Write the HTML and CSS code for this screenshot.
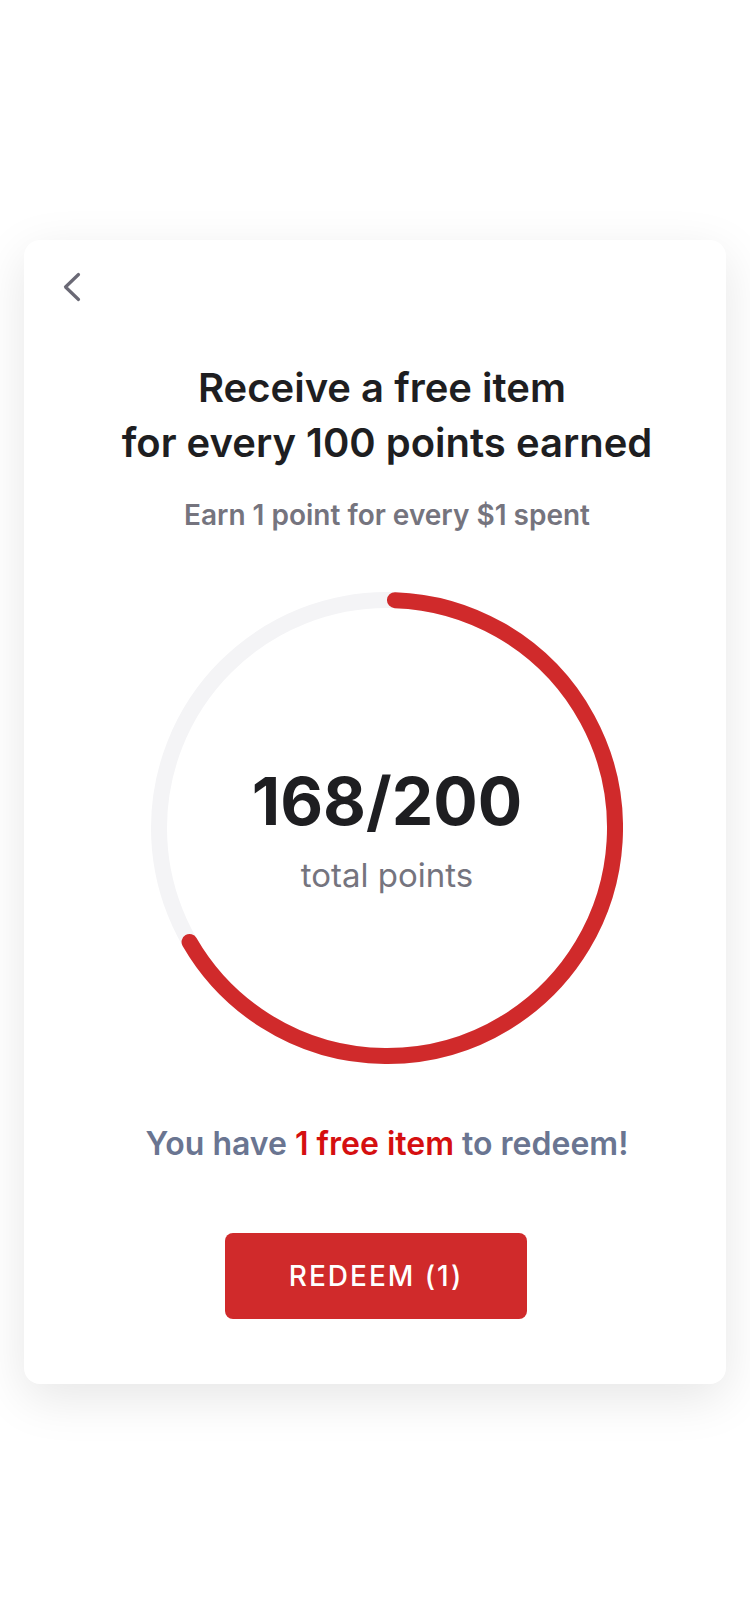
FILE: index.html
```html
<!DOCTYPE html>
<html lang="en">
<head>
<meta charset="utf-8">
<title>Rewards</title>
<link rel="stylesheet" href="styles.css">
</head>
<body>
<main class="card">
  <header class="card-header">
    <button class="back-btn" aria-label="Back">
      <svg width="18" height="30" viewBox="0 0 18 30"><path d="M15.5 2.5 L2.5 15 L15.5 27.5" fill="none" stroke="#6a6975" stroke-width="3.2" stroke-linecap="round" stroke-linejoin="round"/></svg>
    </button>
  </header>
  <section class="content">
    <h1 class="title">Receive a free item&nbsp;<br>for every 100 points earned</h1>
    <p class="subtitle">Earn 1 point for every $1 spent</p>
    <div class="ring">
      <svg class="ring-svg" width="472" height="472" viewBox="0 0 472 472">
        <circle cx="236" cy="236" r="228" fill="none" stroke="#f4f4f6" stroke-width="16"/>
        <path d="M243.96 8.14 A228 228 0 1 1 38.55 350.00" fill="none" stroke="#d02a2b" stroke-width="16" stroke-linecap="round"/>
      </svg>
      <div class="ring-text">
        <div class="points">168/200</div>
        <div class="points-label">total points</div>
      </div>
    </div>
    <p class="notice">You have <span class="accent">1 free item</span> to redeem!</p>
  </section>
  <div class="actions">
    <button class="redeem-btn">REDEEM (1)</button>
  </div>
</main>
</body>
</html>
```
FILE: styles.css
```css
* { box-sizing: border-box; }
html, body {
  margin: 0;
  padding: 0;
  background: #ffffff;
}
body {
  font-family: Inter, "Noto Sans", "Liberation Sans", sans-serif;
  padding-top: 240px;
  padding-bottom: 240px;
}
.card {
  margin: 0 24px;
  width: 702px;
  background: #ffffff;
  border-radius: 16px;
  box-shadow: 0 14px 50px rgba(0, 0, 0, 0.1);
  padding: 32px 0 65px;
  display: flex;
  flex-direction: column;
}
.card-header {
  display: flex;
  padding-left: 39px;
  height: 30px;
}
.back-btn {
  border: 0;
  background: none;
  padding: 0;
  margin: 0;
  width: 18px;
  height: 30px;
  display: block;
  cursor: pointer;
}
.back-btn svg { display: block; }
.content {
  display: flex;
  flex-direction: column;
  align-items: center;
  padding-left: 24px;
}
.title {
  margin: 58px 0 0;
  font-size: 40px;
  line-height: 55px;
  font-weight: 600;
  color: #1e1e21;
  text-align: center;
}
.subtitle {
  margin: 27px 0 0;
  font-size: 28px;
  line-height: 36px;
  font-weight: 600;
  color: #75747e;
  text-align: center;
}
.ring {
  margin-top: 58.5px;
  width: 472px;
  height: 472px;
  display: grid;
}
.ring-svg {
  grid-area: 1 / 1;
  display: block;
}
.ring-text {
  grid-area: 1 / 1;
  align-self: start;
  margin-top: 176px;
  display: flex;
  flex-direction: column;
  align-items: center;
}
.points {
  font-size: 66px;
  line-height: 66px;
  font-weight: 700;
  color: #1e1e21;
}
.points-label {
  margin-top: 21px;
  font-size: 33px;
  line-height: 40px;
  font-weight: 400;
  color: #75747e;
}
.notice {
  margin: 60px 0 0;
  font-size: 32px;
  line-height: 40px;
  font-weight: 600;
  color: #6a7591;
  text-align: center;
}
.accent { color: #d50f10; }
.actions {
  display: flex;
  justify-content: center;
  margin-top: 69px;
  padding-left: 2px;
}
.redeem-btn {
  width: 302px;
  height: 86px;
  border: 0;
  border-radius: 8px;
  background: #d02a2b;
  color: #ffffff;
  font-family: inherit;
  font-size: 28px;
  font-weight: 500;
  letter-spacing: 2px;
  padding: 0;
  cursor: pointer;
}
```
